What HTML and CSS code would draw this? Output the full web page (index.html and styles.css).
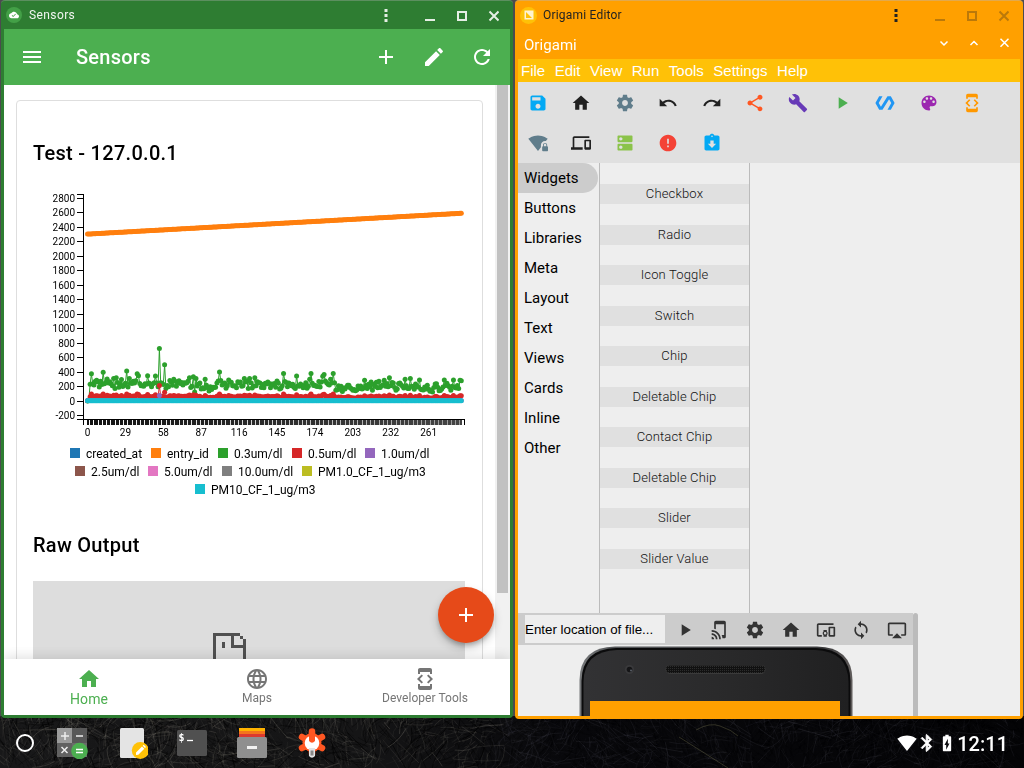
FILE: index.html
```html
<!DOCTYPE html>
<html lang="en">
<head>
<meta charset="utf-8">
<title>Desktop</title>
<link rel="stylesheet" href="styles.css">
</head>
<body>
<svg class="sprites" aria-hidden="true">
<symbol id="menu" viewBox="0 0 24 24"><path d="M3 18h18v-2H3v2zm0-5h18v-2H3v2zm0-7v2h18V6H3z"/></symbol>
<symbol id="add" viewBox="0 0 24 24"><path d="M19 13h-6v6h-2v-6H5v-2h6V5h2v6h6v2z"/></symbol>
<symbol id="edit" viewBox="0 0 24 24"><path d="M3 17.25V21h3.75L17.81 9.94l-3.75-3.75L3 17.25zM20.71 7.04c.39-.39.39-1.02 0-1.41l-2.34-2.34c-.39-.39-1.02-.39-1.41 0l-1.83 1.83 3.75 3.75 1.83-1.83z"/></symbol>
<symbol id="refresh" viewBox="0 0 24 24"><path d="M17.65 6.35C16.2 4.9 14.21 4 12 4c-4.42 0-7.99 3.58-7.99 8s3.57 8 7.99 8c3.73 0 6.84-2.55 7.73-6h-2.08c-.82 2.33-3.04 4-5.65 4-3.31 0-6-2.69-6-6s2.69-6 6-6c1.66 0 3.14.69 4.22 1.78L13 11h7V4l-2.35 2.35z"/></symbol>
<symbol id="save" viewBox="0 0 24 24"><path d="M17 3H5c-1.11 0-2 .9-2 2v14c0 1.1.89 2 2 2h14c1.1 0 2-.9 2-2V7l-4-4zm-5 16c-1.66 0-3-1.34-3-3s1.34-3 3-3 3 1.34 3 3-1.34 3-3 3zm3-10H5V5h10v4z"/></symbol>
<symbol id="home" viewBox="0 0 24 24"><path d="M10 20v-6h4v6h5v-8h3L12 3 2 12h3v8z"/></symbol>
<symbol id="settings" viewBox="0 0 24 24"><path d="M19.43 12.98c.04-.32.07-.64.07-.98s-.03-.66-.07-.98l2.11-1.65c.19-.15.24-.42.12-.64l-2-3.46c-.12-.22-.39-.3-.61-.22l-2.49 1c-.52-.4-1.08-.73-1.69-.98l-.38-2.65C14.46 2.18 14.25 2 14 2h-4c-.25 0-.46.18-.49.42l-.38 2.65c-.61.25-1.17.59-1.69.98l-2.49-1c-.23-.09-.49 0-.61.22l-2 3.46c-.13.22-.07.49.12.64l2.11 1.65c-.04.32-.07.65-.07.98s.03.66.07.98l-2.11 1.65c-.19.15-.24.42-.12.64l2 3.46c.12.22.39.3.61.22l2.49-1c.52.4 1.08.73 1.69.98l.38 2.65c.03.24.24.42.49.42h4c.25 0 .46-.18.49-.42l.38-2.65c.61-.25 1.17-.59 1.69-.98l2.49 1c.23.09.49 0 .61-.22l2-3.46c.12-.22.07-.49-.12-.64l-2.11-1.65zM12 15.5c-1.93 0-3.5-1.57-3.5-3.5s1.57-3.5 3.5-3.5 3.5 1.57 3.5 3.5-1.57 3.5-3.5 3.5z"/></symbol>
<symbol id="undo" viewBox="0 0 24 24"><path d="M12.5 8c-2.65 0-5.05.99-6.9 2.6L2 7v9h9l-3.62-3.62c1.39-1.16 3.16-1.88 5.12-1.88 3.54 0 6.55 2.31 7.6 5.5l2.37-.78C21.08 11.03 17.15 8 12.5 8z"/></symbol>
<symbol id="redo" viewBox="0 0 24 24"><path d="M18.4 10.6C16.55 8.99 14.15 8 11.5 8c-4.65 0-8.58 3.03-9.96 7.22L3.9 16c1.05-3.19 4.05-5.5 7.6-5.5 1.95 0 3.73.72 5.12 1.88L13 16h9V7l-3.6 3.6z"/></symbol>
<symbol id="share" viewBox="0 0 24 24"><path d="M18 16.08c-.76 0-1.44.3-1.96.77L8.91 12.7c.05-.23.09-.46.09-.7s-.04-.47-.09-.7l7.05-4.11c.54.5 1.25.81 2.04.81 1.66 0 3-1.34 3-3s-1.34-3-3-3-3 1.34-3 3c0 .24.04.47.09.7L8.04 9.81C7.5 9.31 6.79 9 6 9c-1.66 0-3 1.34-3 3s1.34 3 3 3c.79 0 1.5-.31 2.04-.81l7.12 4.16c-.05.21-.08.43-.08.65 0 1.61 1.31 2.92 2.92 2.92s2.92-1.31 2.92-2.92-1.31-2.92-2.92-2.92z"/></symbol>
<symbol id="build" viewBox="0 0 24 24"><path d="M22.7 19l-9.1-9.1c.9-2.3.4-5-1.5-6.9-2-2-5-2.4-7.4-1.3L9 6 6 9 1.6 4.7C.4 7.1.9 10.1 2.9 12.1c1.9 1.9 4.6 2.4 6.9 1.5l9.1 9.1c.4.4 1 .4 1.4 0l2.3-2.3c.5-.4.5-1.1.1-1.4z"/></symbol>
<symbol id="play" viewBox="0 0 24 24"><path d="M8 5v14l11-7z"/></symbol>
<symbol id="polymer" viewBox="0 0 24 24"><path d="M19 4h-4L7.11 16.63 4.5 12 9 4H5L.5 12 5 20h4l7.89-12.63L19.5 12 15 20h4l4.5-8z"/></symbol>
<symbol id="palette" viewBox="0 0 24 24"><path d="M12 3c-4.97 0-9 4.03-9 9s4.03 9 9 9c.83 0 1.5-.67 1.5-1.5 0-.39-.15-.74-.39-1.01-.23-.26-.38-.61-.38-.99 0-.83.67-1.5 1.5-1.5H16c2.76 0 5-2.24 5-5 0-4.42-4.03-8-9-8zm-5.5 9c-.83 0-1.5-.67-1.5-1.5S5.67 9 6.5 9 8 9.67 8 10.5 7.33 12 6.5 12zm3-4C8.67 8 8 7.33 8 6.5S8.67 5 9.5 5s1.5.67 1.5 1.5S10.33 8 9.5 8zm5 0c-.83 0-1.5-.67-1.5-1.5S13.67 5 14.5 5s1.5.67 1.5 1.5S15.33 8 14.5 8zm3 4c-.83 0-1.5-.67-1.5-1.5S16.67 9 17.5 9s1.5.67 1.5 1.5-.67 1.5-1.5 1.5z"/></symbol>
<symbol id="devmode" viewBox="0 0 24 24"><path d="M7 5h10v2h2V3c0-1.1-.9-1.99-2-1.99L7 1c-1.1 0-2 .9-2 2v4h2V5zm8.41 11.59L20 12l-4.59-4.59L14 8.83 17.17 12 14 15.17l1.41 1.42zM10 15.17L6.83 12 10 8.83 8.59 7.41 4 12l4.59 4.59L10 15.17zM17 19H7v-2H5v4c0 1.1.9 2 2 2h10c1.1 0 2-.9 2-2v-4h-2v2z"/></symbol>
<symbol id="wifilock" viewBox="0 0 24 24"><path d="M23 16v-1.5c0-1.4-1.1-2.5-2.5-2.5S18 13.1 18 14.5V16c-.5 0-1 .5-1 1v4c0 .5.5 1 1 1h5c.5 0 1-.5 1-1v-4c0-.5-.5-1-1-1zm-1 0h-3v-1.5c0-.8.7-1.5 1.5-1.5s1.5.7 1.5 1.5V16z"/><path d="M15.5 14.5c0-2.8 2.2-5 5-5 .4 0 .7 0 1 .1L23.6 7c-.4-.3-4.9-4-11.6-4C5.3 3 .8 6.7.4 7L12 21.5l3.5-4.3v-2.7z"/></symbol>
<symbol id="devices" viewBox="0 0 24 24"><path d="M4 6h18V4H4c-1.1 0-2 .9-2 2v11H0v3h14v-3H4V6zm19 2h-6c-.55 0-1 .45-1 1v10c0 .55.45 1 1 1h6c.55 0 1-.45 1-1V9c0-.55-.45-1-1-1zm-1 9h-4v-7h4v7z"/></symbol>
<symbol id="dns" viewBox="0 0 24 24"><path d="M20 13H4c-.55 0-1 .45-1 1v6c0 .55.45 1 1 1h16c.55 0 1-.45 1-1v-6c0-.55-.45-1-1-1zM7 19c-1.1 0-2-.9-2-2s.9-2 2-2 2 .9 2 2-.9 2-2 2zM20 3H4c-.55 0-1 .45-1 1v6c0 .55.45 1 1 1h16c.55 0 1-.45 1-1V4c0-.55-.45-1-1-1zM7 9c-1.1 0-2-.9-2-2s.9-2 2-2 2 .9 2 2-.9 2-2 2z"/></symbol>
<symbol id="error" viewBox="0 0 24 24"><path d="M12 2C6.48 2 2 6.48 2 12s4.48 10 10 10 10-4.48 10-10S17.52 2 12 2zm1 15h-2v-2h2v2zm0-4h-2V7h2v6z"/></symbol>
<symbol id="returned" viewBox="0 0 24 24"><path d="M19 3h-4.18C14.4 1.84 13.3 1 12 1c-1.3 0-2.4.84-2.82 2H5c-1.1 0-2 .9-2 2v14c0 1.1.9 2 2 2h14c1.1 0 2-.9 2-2V5c0-1.1-.9-2-2-2zm-7 0c.55 0 1 .45 1 1s-.45 1-1 1-1-.45-1-1 .45-1 1-1zm0 15l-5-5h3V9h4v4h3l-5 5z"/></symbol>
<symbol id="tap" viewBox="0 0 24 24"><path d="M2 16v2c2.76 0 5 2.24 5 5h2c0-3.87-3.13-7-7-7zm0 4v3h3c0-1.66-1.34-3-3-3zm0-8v2c4.97 0 9 4.03 9 9h2c0-6.08-4.92-11-11-11zM17 1.01L7 1c-1.1 0-2 .9-2 2v7.37c.69.16 1.36.37 2 .64V5h10v13h-3.03c.52 1.25.84 2.59.95 4H17c1.1 0 2-.9 2-2V3c0-1.1-.9-1.99-2-1.99z"/></symbol>
<symbol id="others" viewBox="0 0 24 24"><path d="M3 6h18V4H3c-1.1 0-2 .9-2 2v12c0 1.1.9 2 2 2h4v-2H3V6zm10 6H9v1.78c-.61.55-1 1.33-1 2.22s.39 1.67 1 2.22V20h4v-1.78c.61-.55 1-1.34 1-2.22s-.39-1.67-1-2.22V12zm-2 5.5c-.83 0-1.5-.67-1.5-1.5s.67-1.5 1.5-1.5 1.5.67 1.5 1.5-.67 1.5-1.5 1.5zM22 8h-6c-.5 0-1 .5-1 1v10c0 .5.5 1 1 1h6c.5 0 1-.5 1-1V9c0-.5-.5-1-1-1zm-1 10h-4v-8h4v8z"/></symbol>
<symbol id="sync" viewBox="0 0 24 24"><path d="M12 4V1L8 5l4 4V6c3.31 0 6 2.69 6 6 0 1.01-.25 1.97-.7 2.8l1.46 1.46C19.54 15.03 20 13.57 20 12c0-4.42-3.58-8-8-8zm0 14c-3.31 0-6-2.69-6-6 0-1.01.25-1.97.7-2.8L5.24 7.74C4.46 8.97 4 10.43 4 12c0 4.42 3.58 8 8 8v3l4-4-4-4v3z"/></symbol>
<symbol id="airplay" viewBox="0 0 24 24"><path d="M6 22h12l-6-6zM21 3H3c-1.1 0-2 .9-2 2v12c0 1.1.9 2 2 2h4v-2H3V5h18v12h-4v2h4c1.1 0 2-.9 2-2V5c0-1.1-.9-2-2-2z"/></symbol>
<symbol id="globe" viewBox="0 0 24 24"><path d="M11.99 2C6.47 2 2 6.48 2 12s4.47 10 9.99 10C17.52 22 22 17.52 22 12S17.52 2 11.99 2zm6.93 6h-2.95c-.32-1.25-.78-2.45-1.38-3.56 1.84.63 3.37 1.91 4.33 3.56zM12 4.04c.83 1.2 1.48 2.53 1.91 3.96h-3.82c.43-1.43 1.08-2.76 1.91-3.96zM4.26 14C4.1 13.36 4 12.69 4 12s.1-1.36.26-2h3.38c-.08.66-.14 1.32-.14 2 0 .68.06 1.34.14 2H4.26zm.82 2h2.95c.32 1.25.78 2.45 1.38 3.56-1.84-.63-3.37-1.9-4.33-3.56zm2.95-8H5.08c.96-1.66 2.49-2.93 4.33-3.56C8.81 5.55 8.35 6.75 8.03 8zM12 19.96c-.83-1.2-1.48-2.53-1.91-3.96h3.82c-.43 1.43-1.08 2.76-1.91 3.96zM14.34 14H9.66c-.09-.66-.16-1.32-.16-2 0-.68.07-1.35.16-2h4.68c.09.65.16 1.32.16 2 0 .68-.07 1.34-.16 2zm.25 5.56c.6-1.11 1.06-2.31 1.38-3.56h2.95c-.96 1.65-2.49 2.93-4.33 3.56zM16.36 14c.08-.66.14-1.32.14-2 0-.68-.06-1.34-.14-2h3.38c.16.64.26 1.31.26 2s-.1 1.36-.26 2h-3.38z"/></symbol>
<symbol id="cloud" viewBox="0 0 24 24"><path d="M19.35 10.04C18.67 6.59 15.64 4 12 4 9.11 4 6.6 5.64 5.35 8.04 2.34 8.36 0 10.91 0 14c0 3.31 2.69 6 6 6h13c2.76 0 5-2.24 5-5 0-2.64-2.05-4.78-4.65-4.96zM10 17l-3.5-3.5 1.41-1.41L10 14.17 15.18 9l1.41 1.41L10 17z"/></symbol>
<symbol id="wifi" viewBox="0 0 24 24"><path d="M12.01 21.49L23.64 7c-.45-.34-4.93-4-11.64-4C5.28 3 .81 6.66.36 7l11.63 14.49.01.01.01-.01z"/></symbol>
<symbol id="bluetooth" viewBox="0 0 24 24"><path d="M17.71 7.71L12 2h-1v7.59L6.41 5 5 6.41 10.59 12 5 17.59 6.41 19 11 14.41V22h1l5.71-5.71-4.3-4.29 4.3-4.29zM13 5.83l1.88 1.88L13 9.59V5.83zm1.88 10.46L13 18.17v-3.76l1.88 1.88z"/></symbol>
<symbol id="battery" viewBox="0 0 24 24"><path d="M15.67 4H14V2h-4v2H8.33C7.6 4 7 4.6 7 5.33v15.33C7 21.4 7.6 22 8.33 22h7.33c.74 0 1.34-.6 1.34-1.33V5.33C17 4.6 16.4 4 15.67 4zM11 20v-5.5H9L13 7v5.5h2L11 20z"/></symbol>
<symbol id="controls" viewBox="0 0 116 16"><path d="M1.5 2h3v3h-3zM1.5 7h3v3h-3zM1.5 12h3v3h-3z"/><g class="ctl"><path d="M42 12h10v2H42z"/><path fill-rule="evenodd" d="M74 4h10v10H74zM76 6v6h6V6z"/><path d="M106.500 4.500l9 9M115.500 4.500l-9 9" fill="none" stroke="currentColor" stroke-width="2"/></g></symbol>
</svg>

<main class="desktop">
  <section class="window sensors">
    <header class="titlebar">
      <span class="appicon green"><svg class="i10"><use href="#cloud"/></svg></span>
      <span class="wintitle">Sensors</span>
      <svg class="controls"><use href="#controls"/></svg>
    </header>
    <div class="appbar">
      <svg class="i24"><use href="#menu"/></svg>
      <h1>Sensors</h1>
      <svg class="i24"><use href="#add"/></svg>
      <svg class="i24"><use href="#edit"/></svg>
      <svg class="i24"><use href="#refresh"/></svg>
    </div>
    <div class="content">
      <article class="card">
        <h2>Test - 127.0.0.1</h2>
        <svg class="chart" id="chart" viewBox="33 189 432 320"></svg>
        <h2>Raw Output</h2>
        <div class="frame">
          <svg class="sad" viewBox="0 0 33 40" shape-rendering="crispEdges"><path d="M0 0h27v3h3v3h3v34h-3V15H18V3H3v37H0zM21 3v9h9V6h-3V3zM9 9h3v6H9z" fill-rule="evenodd"/></svg>
        </div>
      </article>
      <div class="scroll"><div class="thumb"></div></div>
    </div>
    <div class="fab"><svg class="i24"><use href="#add"/></svg></div>
    <nav class="tabs">
      <div class="tab on"><svg class="i24"><use href="#home"/></svg><span>Home</span></div>
      <div class="tab"><svg class="i24"><use href="#globe"/></svg><span>Maps</span></div>
      <div class="tab"><svg class="i24"><use href="#devmode"/></svg><span>Developer Tools</span></div>
    </nav>
  </section>

  <section class="window origami">
    <header class="titlebar">
      <span class="appicon yellow"><svg class="i10" viewBox="0 0 10 10"><path fill-rule="evenodd" d="M.5.5h9v9h-9zM2 2l6 6H2z"/></svg></span>
      <span class="wintitle">Origami Editor</span>
      <svg class="controls"><use href="#controls"/></svg>
    </header>
    <div class="subbar">
      <span>Origami</span>
      <svg class="subctl" viewBox="0 0 72 12"><path d="M3.500 4.500l3.500 3.500 3.500-3.500M33.500 8L37 4.500 40.500 8M63.500 1.800l8 8M71.500 1.800l-8 8"/></svg>
    </div>
    <nav class="menubar"><span>File</span><span>Edit</span><span>View</span><span>Run</span><span>Tools</span><span>Settings</span><span>Help</span></nav>
    <div class="tools">
      <svg class="c-blue"><use href="#save"/></svg><svg class="c-black"><use href="#home"/></svg><svg class="c-slate"><use href="#settings"/></svg><svg class="c-black"><use href="#undo"/></svg><svg class="c-black"><use href="#redo"/></svg><svg class="c-deep"><use href="#share"/></svg><svg class="c-violet"><use href="#build"/></svg><svg class="c-green"><use href="#play"/></svg><svg class="c-azure"><use href="#polymer"/></svg><svg class="c-purple"><use href="#palette"/></svg><svg class="c-orange"><use href="#devmode"/></svg>
      <svg class="c-slate"><use href="#wifilock"/></svg><svg class="c-black"><use href="#devices"/></svg><svg class="c-lime"><use href="#dns"/></svg><svg class="c-red"><use href="#error"/></svg><svg class="c-blue"><use href="#returned"/></svg>
    </div>
    <div class="panes">
      <ul class="cats"><li class="sel">Widgets</li><li>Buttons</li><li>Libraries</li><li>Meta</li><li>Layout</li><li>Text</li><li>Views</li><li>Cards</li><li>Inline</li><li>Other</li></ul>
      <ul class="widgets"><li>Checkbox</li><li>Radio</li><li>Icon Toggle</li><li>Switch</li><li>Chip</li><li>Deletable Chip</li><li>Contact Chip</li><li>Deletable Chip</li><li>Slider</li><li>Slider Value</li></ul>
    </div>
    <div class="preview">
      <div class="stage">
        <div class="runbar">
          <div class="field">Enter location of file...</div>
          <svg><use href="#play"/></svg><svg><use href="#tap"/></svg><svg><use href="#settings"/></svg><svg><use href="#home"/></svg><svg><use href="#others"/></svg><svg><use href="#sync"/></svg><svg><use href="#airplay"/></svg>
        </div>
        <svg class="phone" viewBox="579 645 274 71">
          <defs>
            <linearGradient id="body" x1="0" y1="0" x2="1" y2="0"><stop offset="0" stop-color="#323234"/><stop offset=".5" stop-color="#2a2a2b"/><stop offset="1" stop-color="#202021"/></linearGradient>
            <linearGradient id="edge" x1="0" y1="0" x2="1" y2="0"><stop offset="0" stop-color="#77797b"/><stop offset=".12" stop-color="#55575a"/><stop offset=".9" stop-color="#3c3c3e"/><stop offset="1" stop-color="#605c5b"/></linearGradient>
            <pattern id="mesh" width="2" height="2" patternUnits="userSpaceOnUse"><rect width="2" height="2" fill="#111"/><rect width="1" height="1" fill="#2c2c2c"/></pattern>
          </defs>
          <path d="M579.500 720V680Q580 647 615 646.500H817Q852 647 852.500 680V720Z" fill="url(#edge)"/>
          <path d="M581.500 720V681Q582 649 616 648H816Q850 649 850.500 681V720Z" fill="#0b0b0c"/>
          <path d="M583.500 720V682Q584 651 617 650H815Q848 651 848.500 682V720Z" fill="url(#body)"/>
          <circle cx="629.500" cy="669.500" r="4.500" fill="#3a3a3c"/><circle cx="629.500" cy="669.500" r="2.800" fill="#151517"/><circle cx="631" cy="670.500" r="1" fill="#5b6068"/>
          <rect x="665.500" y="665" width="100" height="9" rx="4.500" fill="#3a3a3a"/><rect x="666" y="665.500" width="99" height="7.500" rx="3.700" fill="url(#mesh)"/>
          <path d="M590 701h250v15H590z" fill="#ffa000"/>
        </svg>
      </div>
      <div class="divider"></div>
    </div>
  </section>
</main>

<footer class="taskbar">
  <canvas class="wallpaper" id="wallpaper" width="1024" height="52"></canvas>
  <div class="launcher"></div>
  <div class="dock">
    <svg viewBox="0 0 32 32"><path d="M1 1h15v15H1z" fill="#9b9b9b"/><path d="M16 1h15v15H16z" fill="#585858"/><path d="M1 16h15v14H1z" fill="#616161"/><path d="M16 16h15v14H16z" fill="#6b6b6b"/><path d="M5 9h8M9 5v8M20 9h7M5.500 20l6 6M11.500 20l-6 6" stroke="#eee" stroke-width="1.500"/><circle cx="23.500" cy="24" r="8.300" fill="#4caf50"/><path d="M20 22.500h7M20 25.500h7" stroke="#fff" stroke-width="1.500"/></svg>
    <svg viewBox="0 0 32 32"><rect x="4" y="1" width="24" height="30" rx="1.500" fill="#e4e4e4"/><circle cx="24.300" cy="23.500" r="8.500" fill="#ffc107"/><path d="M20 28v-2.500l6-6 2.300 2.300-6 6zM26.700 18.800l1-1 2.300 2.300-1 1z" fill="#fff"/></svg>
    <svg viewBox="0 0 32 32"><rect x="1" y="3" width="30" height="26" rx="1.500" fill="#505050"/><text x="2.500" y="13.500" class="prompt">$</text><path d="M11 13.500h6" stroke="#fff" stroke-width="1.300"/></svg>
    <svg viewBox="0 0 32 32"><path d="M3 1h26v3.500H3z" fill="#ffb300"/><path d="M3 4h26v3.500H3z" fill="#f4741c"/><path d="M3 7h26v3H3z" fill="#db3a2f"/><rect x="1" y="10" width="30" height="21" rx="1.500" fill="#8f8f8f"/><path d="M11 19h10v3H11z" fill="#f2f2f2"/></svg>
    <svg viewBox="0 0 32 32"><g fill="none" stroke="#ff5722" stroke-width="6.500" stroke-linecap="round" stroke-linejoin="round"><path d="M16 4.500v22M6 10l20 11M26 10L6 21"/></g><circle cx="16" cy="15.500" r="9.500" fill="#ff5722"/><circle cx="16" cy="16" r="7.300" fill="#fff"/><path d="M13 6h6v8q-3 3.500-6 0z" fill="#ff5722"/><path d="M13 21h6v8q-3 3.500-6 0z" fill="#e4e4e4"/><path d="M14.500 23.500h3v5h-3z" fill="#888"/></svg>
  </div>
  <div class="status">
    <svg class="s-wifi"><use href="#wifi"/></svg><svg class="s-bt"><use href="#bluetooth"/></svg><svg class="s-bat"><use href="#battery"/></svg>
    <span>12:11</span>
  </div>
</footer>
<script src="script.js"></script>
</body>
</html>
```
FILE: styles.css
```css
* { box-sizing: border-box; }
body { margin: 0; width: 1024px; height: 768px; overflow: hidden; background: #4b4b4e; font-family: Roboto, sans-serif; display: flex; flex-direction: column; }
h1, h2, ul { margin: 0; padding: 0; }
li { list-style: none; }
svg { fill: currentColor; display: block; flex: none; }
.sprites { position: absolute; width: 0; height: 0; }
.i24 { width: 24px; height: 24px; }
.i10 { width: 10px; height: 10px; }

.desktop { display: flex; flex: none; height: 716px; padding-left: 1px; gap: 2px; align-items: flex-start; position: relative; z-index: 1; }
.window { display: flex; flex-direction: column; padding: 0 3px 3px; border-radius: 4px; border-top: 1px solid; flex: none; }
.sensors { width: 512px; height: 718px; background: #2e7d32; border-top-color: #5c8f5f; position: relative; }
.origami { width: 508px; height: 719px; background: #ffa000; border-top-color: #e2a94d; }
.titlebar { height: 28px; flex: none; display: flex; align-items: center; font-size: 12px; color: #f1f5f1; padding-left: 2px; }
.appicon { width: 16px; height: 16px; border-radius: 50%; display: flex; align-items: center; justify-content: center; margin-right: 7px; color: #fff; }
.green { background: #43a047; }
.yellow { background: #ffc107; width: 17px; height: 17px; margin-right: 6px; }
.wintitle { flex: 1; letter-spacing: .2px; }
.sensors .wintitle { letter-spacing: .4px; }
.controls { width: 116px; height: 16px; margin-right: 11px; }
.sensors .controls { color: #e5eee5; }
.origami .titlebar { color: #222; }
.origami .appicon { color: #fff3d0; }
.origami .controls { color: #222; --dim: .3; }
.ctl { opacity: var(--dim, 1); }

.appbar { height: 56px; flex: none; background: #4caf50; color: #fff; display: flex; align-items: center; padding: 0 16px; gap: 24px; }
.appbar h1 { flex: 1; font-size: 20px; font-weight: 500; padding-left: 8px; letter-spacing: .25px; }
.content { flex: 1; min-height: 0; background: #fff; overflow: hidden; display: flex; justify-content: space-between; align-items: flex-start; }
.card { width: 467px; height: 700px; margin: 15px 0 0 12px; border: 1px solid #dedede; border-radius: 4px; padding: 16px 17px 0 16px; flex: none; }
.card h2 { height: 72px; line-height: 72px; font-size: 20px; font-weight: 500; color: #000; letter-spacing: .28px; }
.chart { width: 432px; height: 320px; }
.chart text { font-family: Roboto, sans-serif; font-size: 10px; fill: #000; }
.chart .legend { font-size: 12px; }
.frame { height: 200px; background: #ddd; padding: 52px 0 0 180px; color: #505050; }
.sad { width: 33px; height: 40px; }
.scroll { width: 15px; height: 574px; background: #f1f1f1; padding: 0 2px; }
.thumb { height: 508px; width: 11px; background: #c1c1c1; }
.fab { position: absolute; left: 437px; top: 586px; width: 56px; height: 56px; border-radius: 50%; background: #e64a19; color: #fff; display: flex; align-items: center; justify-content: center; box-shadow: 0 3px 5px -1px rgba(0,0,0,.25), 0 5px 10px rgba(0,0,0,.2); }
.tabs { height: 56px; flex: none; background: #fff; display: flex; box-shadow: 0 -2px 12px rgba(0,0,0,.13); clip-path: inset(-12px 0 0 0); }
.tab { width: 168px; display: flex; flex-direction: column; align-items: center; color: #757575; font-size: 12px; line-height: 14px; padding-top: 8px; letter-spacing: .05px; }
.tab:first-child { width: 169px; padding-left: 1px; }
.on { color: #4caf50; font-size: 14px; line-height: 16px; }

.subbar { height: 30px; flex: none; color: #fff; display: flex; justify-content: space-between; align-items: center; padding: 1px 11px 0 6px; font-size: 15px; letter-spacing: .05px; }
.subctl { width: 72px; height: 12px; fill: none; stroke: #fff; stroke-width: 1.5; margin-bottom: 4px; }
.menubar { height: 23px; flex: none; background: #ffc107; color: #fff; font: 15px/23px "Liberation Sans", Arial, sans-serif; display: flex; gap: 9.5px; padding-left: 3px; }
.tools { height: 81px; flex: none; background: #e0e0e0; display: grid; grid-template-columns: repeat(11, 40px); grid-auto-rows: 40px; column-gap: 3.4px; padding-top: 1px; place-items: center; }
.tools svg { width: 20px; height: 20px; }
.c-blue { color: #03a9f4; } .c-black { color: #212121; } .c-slate { color: #607d8b; } .c-deep { color: #ff5722; }
.c-violet { color: #673ab7; } .c-green { color: #4caf50; } .c-azure { color: #2196f3; } .c-purple { color: #9c27b0; }
.c-orange { color: #ff9800; } .c-lime { color: #8bc34a; } .c-red { color: #f44336; }
.panes { height: 450px; flex: none; background: #eee; display: flex; }
.cats { width: 82px; border-right: 1px solid #bbb; font-size: 15px; line-height: 30px; color: #000; letter-spacing: .02px; }
.cats li { height: 30px; padding-left: 6px; }
.cats .sel { background: #ccc; width: 80px; border-radius: 0 15px 15px 0; }
.widgets { width: 150px; border-right: 1px solid #bbb; padding-top: 21px; display: flex; flex-direction: column; gap: 20.5px; font-size: 13px; font-weight: 300; line-height: 20px; color: #111; text-align: center; letter-spacing: .15px; }
.widgets li { height: 20px; background: #e0e0e0; }
.preview { flex: 1; background: #eee; display: flex; min-height: 0; }
.stage { width: 395px; }
.runbar { height: 32px; background: #ccc; display: flex; align-items: center; padding-left: 7px; gap: 15.3px; color: #333; }
.runbar svg { width: 20px; height: 20px; margin-top: 2px; }
.field { width: 140px; height: 28px; background: #eee; color: #000; font: 13.333px/30px "Liberation Sans", Arial, sans-serif; margin-right: -5.5px; }
.phone { width: 274px; height: 71px; margin-left: 61px; }
.divider { width: 5px; background: #bbb; border-radius: 3px 3px 0 0; }

.taskbar { position: relative; height: 52px; flex: none; display: flex; align-items: center; padding: 2px 16px 0 16px; color: #fff; background: #08080a; }
.wallpaper { position: absolute; left: 0; top: 0; }
.launcher, .dock, .status { position: relative; }
.launcher { width: 18px; height: 18px; border: 2px solid #fff; border-radius: 50%; margin-right: 22px; }
.dock { display: flex; gap: 28px; flex: 1; }
.dock svg { width: 32px; height: 32px; }
.prompt { font: bold 10px "DejaVu Sans Mono", monospace; fill: #fff; }
.status { display: flex; align-items: center; font-size: 20px; font-weight: 500; line-height: 24px; }
.status span { padding-top: 1px; }
.s-wifi, .s-bt, .s-bat { width: 20px; height: 20px; }
.s-bt { stroke: #fff; stroke-width: 1; }
```
FILE: script.js
```js
// Small deterministic generator so that the drawing is stable between loads.
function rng(seed) {
  return function () {
    seed = (seed * 1664525 + 1013904223) % 4294967296;
    return seed / 4294967296;
  };
}

(function drawChart() {
  const N = 287, X0 = 87.5, STEP = 1.307;
  const x = i => +(X0 + i * STEP).toFixed(2);
  const y = v => +(401 - v * 0.0725).toFixed(2);
  const rand = rng(71);
  let out = '';

  const peaks = { 0: 0, 1: 15, 2: 230, 3: 375, 12: 395, 15: 305, 22: 320, 32: 310, 30: 415, 38: 375, 39: 350, 46: 350, 52: 345, 55: 725, 59: 500, 66: 300,
    78: 320, 81: 335, 83: 310, 90: 300, 101: 400, 108: 290, 120: 310, 124: 310, 128: 320, 150: 380, 160: 345, 170: 300, 171: 380, 180: 340, 181: 365,
    186: 300, 188: 380, 212: 285, 227: 285, 231: 320, 243: 300, 247: 310, 254: 290, 273: 290, 280: 290, 285: 285, 286: 280 };
  const green = [];
  for (let i = 0; i < N; i++) {
    const base = i < 80 ? 240 : i < 98 ? 185 : i < 190 ? 225 : i < 215 ? 180 : i < 250 ? 205 : 180;
    green.push(i in peaks ? peaks[i] : base + (rand() + rand() - 1) * 75);
  }
  const red = green.map((v, i) => i === 55 ? 215 : i === 59 ? 120 : Math.min(95, v * 0.24 + 5));
  const series = [
    ['#ff7f0e', Array.from({ length: N }, (_, i) => 2302 + i * 1.005)],
    ['#2ca02c', green],
    ['#d62728', red],
    ['#9467bd', Array.from({ length: N }, (_, i) => i === 55 ? 75 : 8)],
    ['#17becf', Array.from({ length: N }, () => 5)]
  ];
  for (const [color, data] of series) {
    out += `<polyline fill="none" stroke="${color}" points="${data.map((v, i) => x(i) + ',' + y(v)).join(' ')}"/>`;
    data.forEach((v, i) => { out += `<circle cx="${x(i)}" cy="${y(v)}" r="2.5" fill="${color}"/>`; });
  }

  let axis = 'M77 194.5H83.5V419.5H77M83.5 425V419.5H464.5V425', ticks = '';
  for (let v = -200; v <= 2800; v += 200) {
    axis += `M77 ${Math.floor(y(v)) + 0.5}H83.5`;
    out += `<text x="75" y="${y(v) + 3.7}" text-anchor="end">${v}</text>`;
  }
  for (let i = 0; i < N; i++) {
    ticks += `M${x(i)} 420V425`;
    if (i % 29 === 0 && i <= 261) out += `<text x="${x(i)}" y="436" text-anchor="middle">${i}</text>`;
  }
  out += '<defs><linearGradient id="gap"><stop offset="0" stop-color="#fff"/><stop offset="1" stop-color="#999"/></linearGradient>' +
    '<linearGradient id="tick" gradientUnits="userSpaceOnUse" x1="87" x2="461" y1="0" y2="0"><stop offset="0" stop-color="#111"/><stop offset="1" stop-color="#444"/></linearGradient></defs>';
  out += '<rect x="87" y="420" width="375" height="5" fill="url(#gap)"/>';
  out += `<path d="${ticks}" fill="none" stroke="url(#tick)" shape-rendering="crispEdges"/>`;
  out += `<path d="${axis}" fill="none" stroke="#000" shape-rendering="crispEdges"/>`;

  const legend = [
    [70, 448, '#1f77b4', 'created_at'], [151, 448, '#ff7f0e', 'entry_id'], [218, 448, '#2ca02c', '0.3um/dl'],
    [292, 448, '#d62728', '0.5um/dl'], [365, 448, '#9467bd', '1.0um/dl'],
    [75, 466, '#8c564b', '2.5um/dl'], [148, 466, '#e377c2', '5.0um/dl'], [222, 466, '#7f7f7f', '10.0um/dl'],
    [302, 466, '#bcbd22', 'PM1.0_CF_1_ug/m3'], [195, 484, '#17becf', 'PM10_CF_1_ug/m3']
  ];
  for (const [lx, ly, color, name] of legend) {
    out += `<rect x="${lx}" y="${ly}" width="10" height="10" fill="${color}"/><text class="legend" x="${lx + 16}" y="${ly + 10}">${name}</text>`;
  }
  document.getElementById('chart').innerHTML = out;
})();

(function drawWallpaper() {
  const c = document.getElementById('wallpaper').getContext('2d');
  const rand = rng(9);
  const shade = c.createLinearGradient(0, 0, 1024, 0);
  shade.addColorStop(0, '#181819');
  shade.addColorStop(0.35, '#151516');
  shade.addColorStop(0.55, '#08080b');
  shade.addColorStop(1, '#040406');
  c.fillStyle = shade;
  c.fillRect(0, 0, 1024, 52);
  // Fine grass strands, lighter and denser on the left half.
  for (let i = 0; i < 3200; i++) {
    const sx = rand() * 1024, sy = rand() * 64 - 6;
    const angle = Math.sin(sx / 60) * 0.9 + Math.cos(sy / 12) * 0.5 + (rand() - 0.5) * 2.4 - Math.PI / 2;
    const len = 6 + rand() * 28;
    const left = sx < 490;
    const a = left ? 0.06 + rand() * 0.24 : 0.03 + rand() * 0.13;
    c.strokeStyle = rand() < 0.5 ? `rgba(0,0,0,${a * 2.4})` : `rgba(${left ? '140,136,124' : '120,120,138'},${a})`;
    c.lineWidth = 0.4 + rand() * 0.6;
    const ex = sx + Math.cos(angle) * len, ey = sy + Math.sin(angle) * len;
    const bend = (rand() - 0.5) * len * 0.6;
    c.beginPath();
    c.moveTo(sx, sy);
    c.quadraticCurveTo((sx + ex) / 2 + bend, (sy + ey) / 2 + bend, ex, ey);
    c.stroke();
  }
  c.strokeStyle = 'rgba(130,125,85,.5)';
  c.lineWidth = 0.7;
  c.beginPath();
  c.moveTo(679, 21);
  c.lineTo(728, 52);
  c.moveTo(696, 14);
  c.quadraticCurveTo(710, 6, 720, 10);
  c.quadraticCurveTo(732, 14, 738, 20);
  c.stroke();
})();
```
